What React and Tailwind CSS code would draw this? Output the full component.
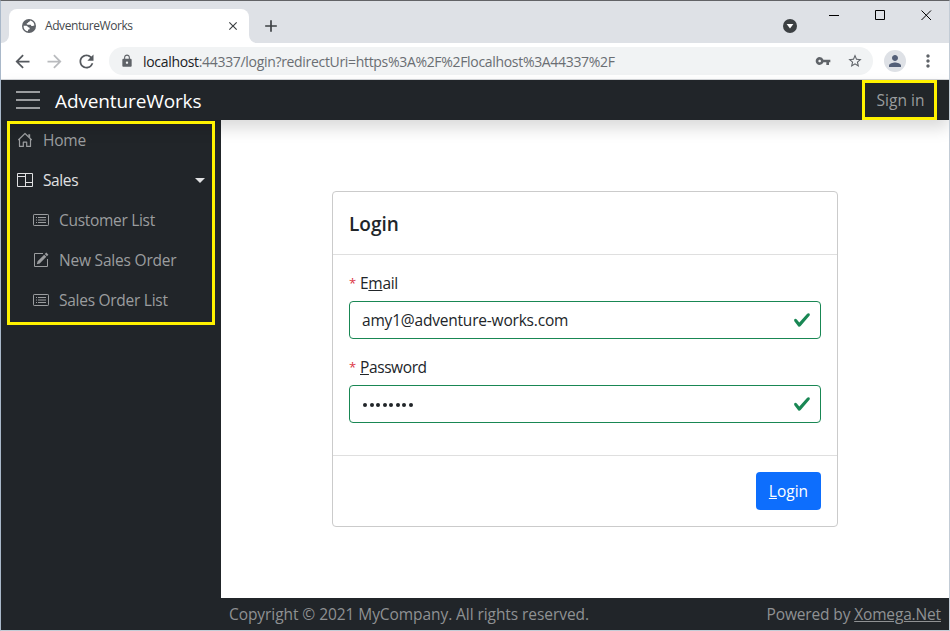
import {
  MdClose,
  MdAdd,
  MdArrowBack,
  MdArrowForward,
  MdRefresh,
  MdLock,
  MdVpnKey,
  MdStarBorder,
  MdPerson,
  MdMoreVert,
} from "react-icons/md";

function GlobeIcon() {
  return (
    <svg className="size-[14px] shrink-0" viewBox="0 0 14 14">
      <circle cx="7" cy="7" r="7" fill="#5f6368" />
      <path
        d="M8.2 1.5c-.3.9-.9 1.500-1.900 1.500-.3 1-.8 1.300-1.700 1.400.1 1 .7 1.300 1.600 1.300h1.900c.9 0 1.100.6 1.200 1.300h1.300c.7 0 1.100-.4 1.800-.4A5.400 5.400 0 0 0 8.200 1.500zM1.600 6.700A5.400 5.400 0 0 0 6 12.300v-1.600c1 0 1.700-.4 1.700-1.200 0-.9-.7-1.300-1.600-1.300-.4-1-1.100-1.500-2.200-1.500z"
        fill="#fff"
      />
    </svg>
  );
}

function HomeIcon() {
  return (
    <svg className="size-4" viewBox="0 0 16 16" fill="none" stroke="currentColor" strokeWidth="1.200">
      <path d="M1.300 8L8 1.500 14.700 8M2.500 7v7.400h3.800v-4.200h3.400v4.200h3.800V7" strokeLinejoin="round" />
      <path d="M11.300 2.200h1.900v3.900l-1.900-1.900z" fill="currentColor" stroke="none" />
    </svg>
  );
}

function ColumnsIcon() {
  return (
    <svg className="size-4" viewBox="0 0 16 16" fill="none" stroke="currentColor">
      <path d="M.5 1.500h15v13H.5zM8.500 1.500v13M.5 4.500h8M8.500 10.500h7" />
    </svg>
  );
}

function ListIcon() {
  return (
    <svg className="size-4" viewBox="0 0 16 16" fill="none" stroke="currentColor">
      <rect x=".5" y="2.500" width="15" height="11" rx=".7" />
      <path d="M3 5.500h1M5 5.500h8M3 8h1M5 8h8M3 10.500h1M5 10.500h8" />
    </svg>
  );
}

function EditIcon() {
  return (
    <svg className="size-4" viewBox="0 0 16 16" fill="none" stroke="currentColor">
      <path d="M10 1.500H1.500v13h13V7" />
      <path d="M13.300.6l2.100 2.100-1.500 1.500-2.100-2.100zM11.200 2.700l2.100 2.100-6.600 6.600-2.900.9.800-3z" fill="currentColor" stroke="none" />
    </svg>
  );
}

function TabStrip() {
  return (
    <div className="flex h-[42px] bg-[#dee1e6]">
      <div className="flex w-2 items-end bg-white">
        <div className="h-full w-full rounded-br-lg bg-[#dee1e6]" />
      </div>
      <div className="mt-2 flex w-[240px] items-center rounded-t-lg bg-white pr-[9px] pl-[13px]">
        <GlobeIcon />
        <span className="ml-[9px] flex-1 text-[12px] tracking-[-0.42px] text-[#45494d]">AdventureWorks</span>
        <MdClose className="size-[14px] text-[#3c4043]" />
      </div>
      <div className="w-2 bg-white">
        <div className="h-full w-full rounded-bl-lg bg-[#dee1e6]" />
      </div>
      <MdAdd className="mt-[15px] ml-1 size-5 text-[#3c4043]" />
      <div className="ml-auto flex">
        <svg className="mt-[18px] mr-[31px] size-[14px]" viewBox="0 0 14 14">
          <circle cx="7" cy="7" r="7" fill="#3c4043" />
          <path d="M3.6 5h6.8L7 9.6z" fill="#fff" />
        </svg>
        <svg className="h-[30px] w-[121px]" viewBox="0 0 121 30" fill="none" stroke="#000">
          <path d="M1 14.5h10M47.5 9.5h9v9h-9zM93.5 9.5l9.5 9.5M103 9.5L93.5 19" />
        </svg>
      </div>
    </div>
  );
}

function Toolbar() {
  return (
    <div className="flex h-[37px] items-center border-b border-[#d5d7da] bg-white pl-[11px]">
      <MdArrowBack className="size-[21px] text-[#55595e]" />
      <MdArrowForward className="ml-[11px] size-[21px] text-[#b9bbbe]" />
      <MdRefresh className="ml-[11px] size-[21px] text-[#55595e]" />
      <div className="ml-3 flex h-7 w-[764px] items-center rounded-full bg-[#f1f3f4] pr-[10px] pl-[11px]">
        <MdLock className="size-[14px] text-[#5f6368]" />
        <span className="ml-[9px] flex-1 text-[14px] tracking-[-0.32px] whitespace-nowrap text-[#6a6e73]">
          <span className="text-[#202124]">localhost</span>
          :44337/login?redirectUri=https%3A%2F%2Flocalhost%3A44337%2F
        </span>
        <MdVpnKey className="size-4 text-[#5f6368]" />
        <MdStarBorder className="ml-4 size-4 text-[#5f6368]" />
      </div>
      <div className="ml-[11px] flex size-[22px] items-center justify-center rounded-full bg-[#dee1e6]">
        <MdPerson className="size-[18px] text-[#535f78]" />
      </div>
      <MdMoreVert className="ml-3 size-5 text-[#5f6368]" />
    </div>
  );
}

function NavBar() {
  return (
    <header className="relative z-10 flex h-10 items-center bg-[#212529] pl-[15px] shadow-[0_8px_16px_rgba(0,0,0,0.15)]">
      <div className="flex w-6 flex-col gap-[6px]">
        <div className="h-[2px] bg-[#9b9d9f]" />
        <div className="h-[2px] bg-[#9b9d9f]" />
        <div className="h-[2px] bg-[#9b9d9f]" />
      </div>
      <span className="mt-[2px] ml-[15px] text-[19px] tracking-[-0.12px] text-white">AdventureWorks</span>
      <div className="mr-[12px] ml-auto flex h-10 w-[75px] items-center justify-center border-[3px] border-[#fff200] pt-[2px] pl-[2px] text-[15.5px] text-[#9b9d9f]">
        Sign in
      </div>
    </header>
  );
}

function SideBar() {
  return (
    <nav className="relative w-[220px] bg-[#212529] text-[15.5px] text-[#9b9d9f]">
      <div className="flex h-10 items-center pl-4">
        <HomeIcon />
        <span className="mt-[2px] ml-[10px] tracking-[-0.2px]">Home</span>
      </div>
      <div className="flex h-10 items-center pr-4 pl-4 text-[#e0e1e2]">
        <ColumnsIcon />
        <span className="mt-[2px] ml-[10px] flex-1 tracking-[-0.4px]">Sales</span>
        <div className="border-x-[5px] border-t-[5px] border-x-transparent border-t-[#e0e1e2]" />
      </div>
      <div className="flex h-10 items-center pl-8">
        <ListIcon />
        <span className="mt-[2px] ml-[10px] tracking-[-0.3px]">Customer List</span>
      </div>
      <div className="flex h-10 items-center pl-8">
        <EditIcon />
        <span className="mt-[2px] ml-[10px] tracking-[-0.2px]">New Sales Order</span>
      </div>
      <div className="flex h-10 items-center pl-8">
        <ListIcon />
        <span className="mt-[2px] ml-[10px] tracking-[-0.27px]">Sales Order List</span>
      </div>
      <div className="absolute top-[1px] left-[6px] z-20 h-[204px] w-[208px] border-[3px] border-[#fff200]" />
    </nav>
  );
}

function Check() {
  return (
    <svg className="size-[18px]" viewBox="0 0 8 8">
      <path
        fill="#198754"
        d="M2.3 6.73L.6 4.53c-.4-1.04.46-1.4 1.1-.8l1.1 1.4 3.4-3.8c.6-.63 1.6-.27 1.2.7l-4 4.6c-.43.5-.8.4-1.1.1z"
      />
    </svg>
  );
}

function Field({ label, children }) {
  return (
    <div>
      <div className="flex h-6 items-center text-[15.5px]">
        <span className="w-[11px] text-[13px] text-[#dc3545]">*</span>
        {label}
      </div>
      <div className="mt-[5px] flex h-[38px] items-center justify-between rounded border border-[#198754] pr-[9px] pl-3 text-[15.5px]">
        {children}
        <Check />
      </div>
    </div>
  );
}

function LoginCard() {
  return (
    <div className="mt-[71px] ml-[111px] flex h-[336px] w-[506px] flex-col rounded border border-[#cbcbcb] bg-white text-[#212529]">
      <div className="flex h-[63px] items-center border-b border-[#dfdfdf] px-4 pt-[3px] text-[19px] font-semibold">
        <span>Login</span>
      </div>
      <div className="flex flex-1 flex-col gap-[17px] px-4 pt-[17px]">
        <Field label={<span className="tracking-[-0.3px]">E<u className="underline-offset-1">m</u>ail</span>}>
          <span className="mt-[2px] tracking-[-0.2px]">amy1@adventure-works.com</span>
        </Field>
        <Field label={<span className="tracking-[-0.4px]"><u className="underline-offset-1">P</u>assword</span>}>
          <span className="mt-[2px] flex gap-[2.5px] pl-px">
            {Array.from({ length: 8 }, (_, i) => (
              <i key={i} className="size-1 rounded-full bg-[#212529]" />
            ))}
          </span>
        </Field>
      </div>
      <div className="flex h-[71px] items-center justify-end border-t border-[#dfdfdf] px-4">
        <button className="h-[38px] w-[65px] rounded bg-[#0d6efd] pt-[2px] text-[15.5px] text-white">
          <u className="underline-offset-1">L</u>ogin
        </button>
      </div>
    </div>
  );
}

export default function App() {
  return (
    <div className="flex h-[631px] w-[950px] flex-col overflow-hidden border border-t-[#626366] border-r-[#c3ccd6] border-b-[#c3ccd6] border-l-[#a9b8c9] font-['Open_Sans','Noto_Sans',sans-serif]">
      <TabStrip />
      <Toolbar />
      <NavBar />
      <div className="flex flex-1">
        <SideBar />
        <div className="flex flex-1 flex-col">
          <main className="flex-1 bg-white">
            <LoginCard />
          </main>
          <footer className="flex h-8 items-center justify-between bg-[#212529] px-2 pt-[2px] text-[15.5px] text-[#8f9193]">
            <span className="tracking-[-0.07px]">Copyright © 2021 MyCompany. All rights reserved.</span>
            <span className="tracking-[-0.15px]">
              Powered by <u className="underline-offset-1">Xomega.Net</u>
            </span>
          </footer>
        </div>
      </div>
    </div>
  );
}
